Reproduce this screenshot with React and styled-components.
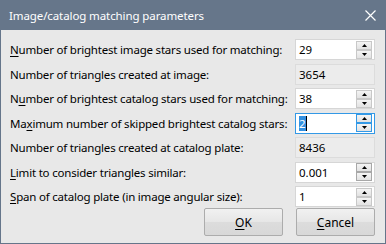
import React from "react";
import styled, { createGlobalStyle, css } from "styled-components";

const Global = createGlobalStyle`
  html, body { margin: 0; padding: 0; background: #e8e8e8; }
  * { box-sizing: border-box; }
`;

const rows = [
  { label: "Number of brightest image stars used for matching:", key: 0, value: "29", spin: true },
  { label: "Number of triangles created at image:", value: "3654", readOnly: true },
  { label: "Number of brightest catalog stars used for matching:", key: 1, value: "38", spin: true },
  { label: "Maximum number of skipped brightest catalog stars:", key: 2, value: "2", spin: true, focused: true },
  { label: "Number of triangles created at catalog plate:", value: "8436", readOnly: true },
  { label: "Limit to consider triangles similar:", key: 0, value: "0.001", spin: true, hot: true },
  { label: "Span of catalog plate (in image angular size):", key: 0, value: "1", spin: true },
];

export default function App() {
  return (
    <>
      <Global />
      <Window>
        <TitleBar>
          <Title>Image/catalog matching parameters</Title>
          <CloseIcon width="11" height="11" viewBox="0 0 11 11">
            <path d="M0.5 0.5 L10.5 10.5 M10.5 0.5 L0.5 10.5" stroke="#fff" strokeWidth="1.2" />
          </CloseIcon>
        </TitleBar>
        <Body>
          <Form>
            {rows.map((r) => (
              <React.Fragment key={r.label}>
                <Label>
                  {r.key === undefined ? (
                    r.label
                  ) : (
                    <>
                      {r.label.slice(0, r.key)}
                      <u>{r.label[r.key]}</u>
                      {r.label.slice(r.key + 1)}
                    </>
                  )}
                </Label>
                {r.readOnly ? (
                  <ReadOnly>{r.value}</ReadOnly>
                ) : (
                  <SpinBox focused={r.focused}>
                    {r.focused ? (
                      <ValueText>
                        <Selected>{r.value}</Selected>
                        <Caret />
                      </ValueText>
                    ) : (
                      <ValueText>{r.value}</ValueText>
                    )}
                    <SpinButtons>
                      <SpinButton focused={r.focused} hot={r.hot}>
                        <Arrow viewBox="0 0 5 3" width="5" height="3">
                          <path d="M2.5 0 L5 3 L0 3 Z" fill="#000" />
                        </Arrow>
                      </SpinButton>
                      <SpinButton focused={r.focused} hot={r.hot}>
                        <Arrow viewBox="0 0 5 3" width="5" height="3">
                          <path d="M0 0 L5 0 L2.5 3 Z" fill="#000" />
                        </Arrow>
                      </SpinButton>
                    </SpinButtons>
                  </SpinBox>
                )}
              </React.Fragment>
            ))}
          </Form>
          <Buttons>
            <Button><u>O</u>K</Button>
            <Button><u>C</u>ancel</Button>
          </Buttons>
        </Body>
      </Window>
    </>
  );
}

const Window = styled.div`
  width: 386px;
  height: 244px;
  border: 1px solid #65758a;
  border-top: none;
  background: #e8e8e8;
  display: flex;
  flex-direction: column;
  font-family: "Noto Sans", "Open Sans", sans-serif;
  font-size: 11.5px;
  color: #000;
`;

const TitleBar = styled.div`
  height: 30px;
  margin: 0 -1px;
  background: #66768a;
  display: flex;
  align-items: center;
  justify-content: space-between;
  padding: 0 10px 0 9px;
`;

const Title = styled.span`
  color: #fff;
  font-size: 11.5px;
  letter-spacing: -0.1px;
`;

const CloseIcon = styled.svg`
  display: block;
  margin-top: 1px;
`;

const Body = styled.div`
  flex: 1;
  padding: 9px 10px 7px 9px;
  display: flex;
  flex-direction: column;
`;

const Form = styled.div`
  display: grid;
  grid-template-columns: minmax(0, 1fr) 80px;
  grid-auto-rows: 21px;
  row-gap: 3.5px;
  column-gap: 6px;
`;

const Label = styled.div`
  display: flex;
  align-items: center;
  white-space: nowrap;
  letter-spacing: -0.2px;
  u { text-decoration-thickness: 1px; text-underline-offset: 2px; }
`;

const fieldBase = css`
  display: flex;
  align-items: center;
  padding-left: 3px;
  height: 100%;
`;

const ReadOnly = styled.div`
  ${fieldBase}
  background: #ececec;
  border: 1px solid #dcdcdc;
`;

const SpinBox = styled.div`
  ${fieldBase}
  background: #fff;
  border: 1px solid ${(p) => (p.focused ? "#3399e6" : "#d6d6d6")};
  justify-content: space-between;
  padding-right: 2px;
`;

const ValueText = styled.span`
  display: flex;
  align-items: center;
  color: #000;
`;

const Selected = styled.span`
  background: #3390e0;
  color: #fff;
  line-height: 15px;
`;

const Caret = styled.span`
  width: 1px;
  height: 15px;
  background: #000;
`;

const SpinButtons = styled.div`
  display: flex;
  flex-direction: column;
  flex-shrink: 0;
`;

const SpinButton = styled.div`
  width: 16px;
  height: 9px;
  display: flex;
  align-items: center;
  justify-content: center;
  background: linear-gradient(#f4f4f4, #e2e2e2);
  border: 1px solid
    ${(p) => (p.focused ? "#3399e6" : p.hot ? "#a8a8a8" : "#c8c8c8")};
`;

const Arrow = styled.svg`
  display: block;
`;

const Buttons = styled.div`
  margin-top: auto;
  display: flex;
  justify-content: flex-end;
  gap: 13px;
`;

const Button = styled.div`
  width: 79px;
  height: 28px;
  border: 1px solid #acacac;
  border-radius: 2px;
  background: linear-gradient(#f1f1f1 0%, #e6e6e6 50%, #dcdcdc 51%, #d8d8d8 100%);
  display: flex;
  align-items: center;
  justify-content: center;
  font-size: 12px;
  u { text-decoration-thickness: 1px; text-underline-offset: 2px; }
`;
